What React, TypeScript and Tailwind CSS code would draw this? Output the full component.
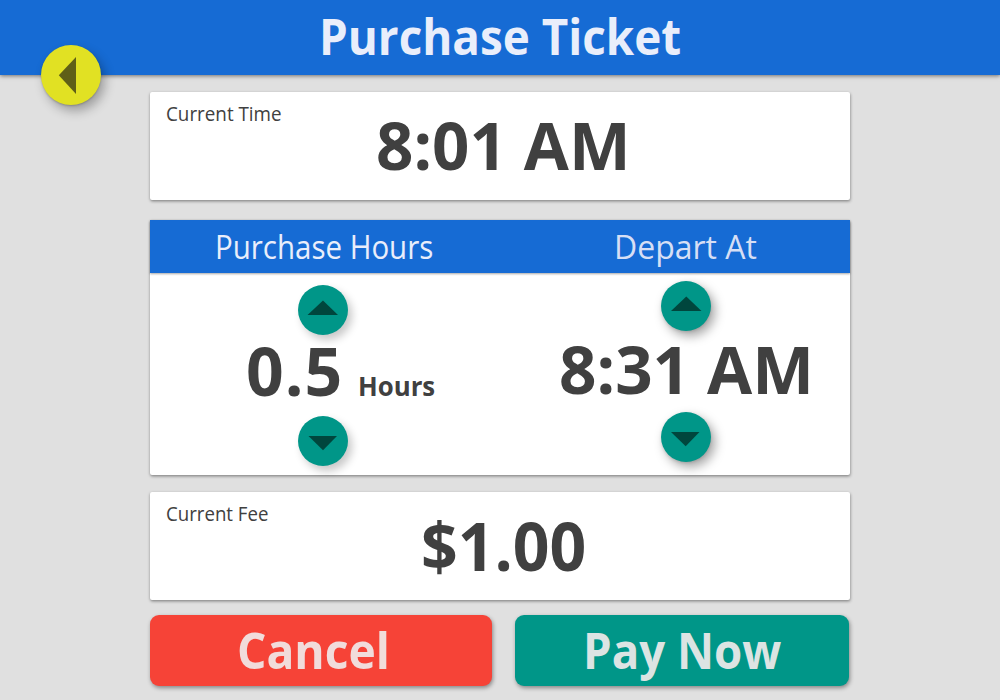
import type { ReactNode } from "react";

type StepButtonProps = {
  label: string;
  points: string;
  className: string;
};

function StepButton({ label, points, className }: StepButtonProps) {
  return (
    <button aria-label={label} className={`block size-[50px] shrink-0 rounded-full bg-[#009688] ${className}`}>
      <svg viewBox="0 0 50 50" className="size-full">
        <polygon points={points} fill="#00463d" />
      </svg>
    </button>
  );
}

function Card({ children, className = "" }: { children: ReactNode; className?: string }) {
  return (
    <section
      className={`w-[700px] rounded-[2px] bg-white shadow-[0_1px_3px_rgba(0,0,0,0.35),1px_2px_3px_rgba(0,0,0,0.12)] ${className}`}
    >
      {children}
    </section>
  );
}

/* Narrowed lettering: className carries the horizontal scale. */
function Narrow({ children, className }: { children: ReactNode; className: string }) {
  return <span className={`inline-block origin-left ${className}`}>{children}</span>;
}

const softShadow = "shadow-[4px_5px_9px_rgba(0,0,0,0.22)]";
const deepShadow = "shadow-[4px_5px_11px_rgba(0,0,0,0.36),0_1px_3px_rgba(0,0,0,0.12)]";

export default function App() {
  return (
    <div className="h-[700px] w-[1000px] overflow-hidden bg-[#e0e0e0] font-['Open_Sans','Noto_Sans',sans-serif] whitespace-nowrap text-[#404040]">
      <header className="relative h-[75px] bg-[#166bd4] pl-[319px] shadow-[0_1px_4px_rgba(0,0,0,0.5)]">
        <h1 className="text-[50px] leading-[73px] font-bold text-[#e9eefb]">
          <Narrow className="scale-x-[0.916]">Purchase Ticket</Narrow>
        </h1>
        <button
          aria-label="Back"
          className="absolute top-[45px] left-[41px] size-[60px] rounded-full bg-[#e1e123] shadow-[4px_6px_11px_rgba(0,0,0,0.3),0_1px_2px_rgba(0,0,0,0.2)]"
        >
          <svg viewBox="0 0 60 60" className="size-full">
            <polygon points="17.8,30.3 35,12 35,49" fill="#5f5f17" />
          </svg>
        </button>
      </header>

      <main className="flex flex-col pt-[17px] pl-[150px]">
        <Card className="flex h-[108px]">
          <h2 className="w-[225.5px] pt-[9px] pl-[16px] text-[20.5px] leading-6">
            <Narrow className="scale-x-[0.918]">Current Time</Narrow>
          </h2>
          <p className="text-[67px] leading-[104px] font-bold">
            <Narrow className="scale-x-[0.976]">8:01 AM</Narrow>
          </p>
        </Card>

        <Card className="mt-5 h-[255px]">
          <div className="flex h-[53px] bg-[#166bd4] text-[33px] leading-[53px] shadow-[0_1px_2px_rgba(0,0,0,0.35)]">
            <h2 className="w-[350px] pl-[65px] text-[#e9eefb]">
              <Narrow className="scale-x-[0.893]">Purchase Hours</Narrow>
            </h2>
            <h2 className="w-[350px] pl-[114px] text-[#d6dff5]">
              <Narrow className="scale-x-[0.969]">Depart At</Narrow>
            </h2>
          </div>
          <div className="flex">
            <div className="w-[350px] pt-3">
              <StepButton label="More hours" points="9.5,30 40,30 25,15.5" className={`ml-[148px] ${softShadow}`} />
              <div className="flex h-[81px] items-baseline pl-[96px] font-bold">
                <span className="w-[111.5px] text-[66px] leading-[70px] tracking-[1px]">0.5</span>
                <span className="text-[27px]">
                  <Narrow className="scale-x-[0.955]">Hours</Narrow>
                </span>
              </div>
              <StepButton label="Fewer hours" points="10.5,20 39,20 25,34.3" className={`ml-[148px] ${softShadow}`} />
            </div>
            <div className="w-[350px] pt-2">
              <StepButton label="Later departure" points="10,30 40.5,30 25.3,15.5" className={`ml-[161px] ${deepShadow}`} />
              <p className="h-[81px] pl-[58.5px] text-[67px] leading-[74px] font-bold">
                <Narrow className="scale-x-[0.978]">8:31 AM</Narrow>
              </p>
              <StepButton label="Earlier departure" points="10,20 38.5,20 24.7,34.3" className={`ml-[161px] ${deepShadow}`} />
            </div>
          </div>
        </Card>

        <Card className="mt-[17px] flex h-[108px]">
          <h2 className="w-[270.5px] pt-[9px] pl-[16px] text-[20.5px] leading-6">
            <Narrow className="scale-x-[0.91]">Current Fee</Narrow>
          </h2>
          <p className="text-[66px] leading-[106px] font-bold">
            <Narrow className="scale-x-[0.974]">$1.00</Narrow>
          </p>
        </Card>

        <div className="mt-[15px] flex gap-[23px] text-[50px] leading-[71px] font-bold">
          <button className="h-[71px] w-[342px] rounded-[9px] bg-[#f64337] pl-[87px] text-left text-[#f1dcdb] shadow-[1px_2px_4px_rgba(0,0,0,0.4)]">
            <Narrow className="scale-x-[0.924]">Cancel</Narrow>
          </button>
          <button className="h-[71px] w-[334px] rounded-[9px] bg-[#009688] pl-[68px] text-left text-[#dce4e3] shadow-[1px_2px_4px_rgba(0,0,0,0.4)]">
            <Narrow className="scale-x-[0.912]">Pay Now</Narrow>
          </button>
        </div>
      </main>
    </div>
  );
}
